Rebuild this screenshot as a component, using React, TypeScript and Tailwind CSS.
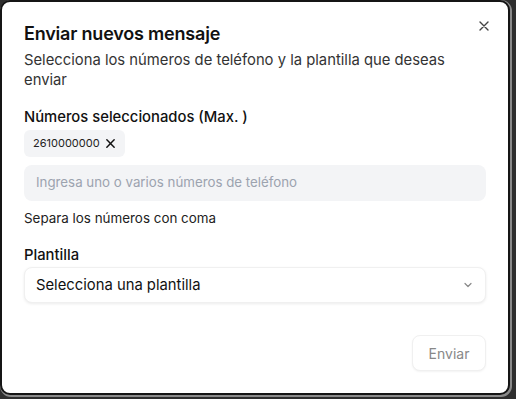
import React from "react";

export default function App() {
  return (
    <div className="w-[516px] h-[399px] bg-[#2e2e2e] overflow-hidden" style={{ fontFamily: "Inter, 'Liberation Sans', sans-serif" }}>
      <div className="relative w-[510px] h-[395px] bg-white rounded-[10px] border-2 border-[#151515] shadow-[1px_1px_0_1px_#8a8a8a] px-[22px] pt-[20px]">
        <button className="absolute right-[18px] top-[18px] text-[#444]">
          <svg width="12" height="12" viewBox="0 0 12 12" fill="none" stroke="currentColor" strokeWidth="1.4" strokeLinecap="round">
            <path d="M2 2l8 8M10 2l-8 8" />
          </svg>
        </button>
        <h2 className="text-[18px] leading-[23px] font-semibold text-[#111] tracking-[-0.2px]">Enviar nuevos mensaje</h2>
        <p className="mt-[5px] text-[14.8px] leading-[20px] text-[#333] pr-[10px]">
          Selecciona los números de teléfono y la plantilla que deseas enviar
        </p>
        <div className="mt-[17px] text-[14.8px] leading-[20px] font-medium text-[#111]">Números seleccionados (Max. )</div>
        <div className="mt-[3px] flex">
          <span className="inline-flex items-center gap-[5px] h-[27px] px-[9px] rounded-md bg-[#f3f4f6] text-[11px] text-[#222]">
            2610000000
            <svg width="11" height="11" viewBox="0 0 12 12" fill="none" stroke="#111" strokeWidth="1.6" strokeLinecap="round">
              <path d="M2 2l8 8M10 2l-8 8" />
            </svg>
          </span>
        </div>
        <div className="mt-[8px] h-[36px] rounded-lg bg-[#f3f4f6] flex items-center px-[12px] text-[13.3px] text-[#9ca3af]">
          Ingresa uno o varios números de teléfono
        </div>
        <div className="mt-[8px] text-[13.4px] leading-[18px] text-[#222]">Separa los números con coma</div>
        <div className="mt-[18px] text-[14.8px] leading-[20px] font-medium text-[#111]">Plantilla</div>
        <div className="mt-[2px] h-[36px] rounded-lg bg-white border border-[#f0f0f0] shadow-[0_1px_3px_rgba(0,0,0,0.08)] flex items-center justify-between px-[11px] text-[14.8px] text-[#111]">
          <span>Selecciona una plantilla</span>
          <svg width="12" height="12" viewBox="0 0 12 12" fill="none" stroke="#888" strokeWidth="1.2" strokeLinecap="round" strokeLinejoin="round">
            <path d="M3 4.5l3 3 3-3" />
          </svg>
        </div>
        <div className="mt-[32px] flex justify-end">
          <button className="h-[36px] w-[74px] rounded-lg bg-white border border-[#f0f0f0] shadow-[0_1px_2px_rgba(0,0,0,0.05)] text-[14px] text-[#888]">
            Enviar
          </button>
        </div>
      </div>
    </div>
  );
}
